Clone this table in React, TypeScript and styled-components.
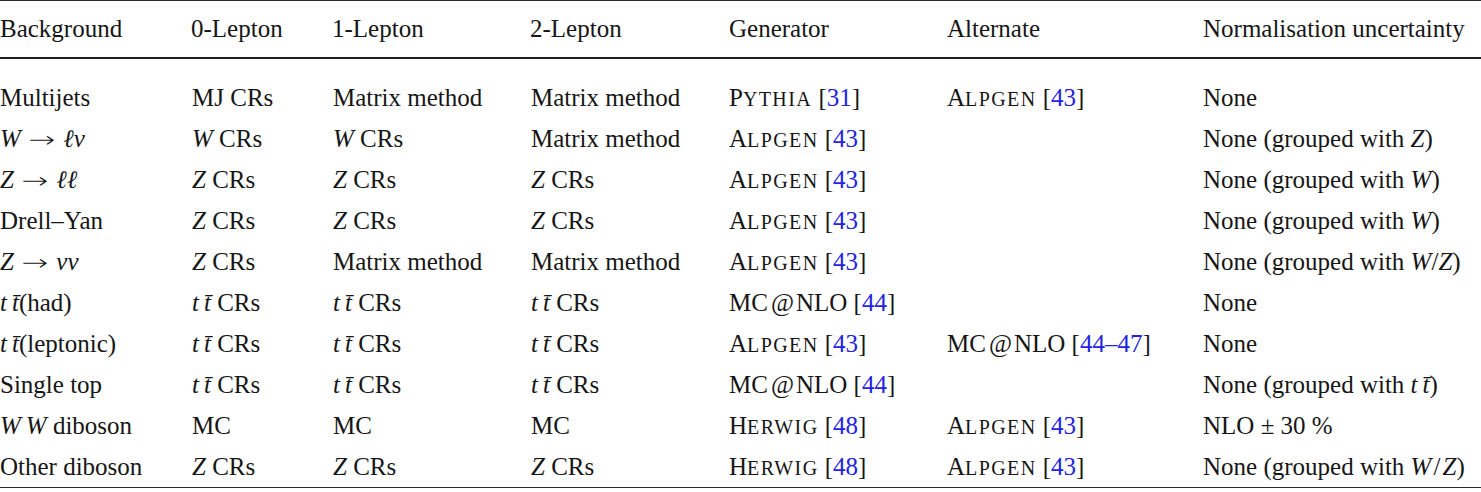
import React from "react";
import styled, { createGlobalStyle } from "styled-components";

const Global = createGlobalStyle`
  html, body { margin: 0; padding: 0; background: #ffffff; }
  body { font-family: "Liberation Serif", "Times New Roman", serif; color: #161616; }
`;

const Table = styled.div`
  width: 1481px;
  border-top: 1.5px solid #2a2a2a;
  border-bottom: 1.5px solid #2a2a2a;
  font-size: 25px;
  line-height: 1;
`;

const Row = styled.div<{ $head?: boolean }>`
  display: grid;
  grid-template-columns: 191px 141px 198px 199px 218px 256px 1fr;
  align-items: center;
  height: ${(p) => (p.$head ? "55.5px" : "41.1px")};
  white-space: nowrap;
`;

const Head = styled.div`
  border-bottom: 2px solid #1e1e1e;
`;

const Body = styled.div`
  padding-top: 18px;
`;

const Cell = styled.div<{ $indent?: number }>`
  padding-left: ${(p) => p.$indent ?? 0}px;
`;

const I = styled.i`
  font-style: italic;
`;

const Arrow = styled.span`
  font-family: "DejaVu Sans", sans-serif;
  font-size: 22px;
  font-weight: 300;
  display: inline-block;
  transform: scaleX(1.45);
  margin: 0 12px 0 12px;
`;

const At = styled.span`
  margin: 0 2px 0 3px;
`;

const Cap = styled.span`
  font-size: 1em;
`;

const Small = styled.span`
  font-size: 0.8em;
  letter-spacing: 0.07em;
`;

const Ref = styled.span`
  color: #2323e2;
`;

const SmallCaps = ({ first, rest }: { first: string; rest: string }) => (
  <>
    <Cap>{first}</Cap>
    <Small>{rest}</Small>
  </>
);

const Gen = ({ first, rest, refs }: { first: string; rest: string; refs: string }) => (
  <>
    <SmallCaps first={first} rest={rest} /> [<Ref>{refs}</Ref>]
  </>
);

const Mc = ({ refs }: { refs: string }) => (
  <>
    MC<At>@</At>NLO [<Ref>{refs}</Ref>]
  </>
);

const TT = () => (
  <I>
    t{"\u2009"}t{"\u0304"}
  </I>
);

const ZCR = () => (
  <>
    <I>Z</I> CRs
  </>
);

const TTCR = () => (
  <>
    <TT /> CRs
  </>
);

const Alpgen = () => <Gen first="A" rest="LPGEN" refs="43" />;
const Herwig = () => <Gen first="H" rest="ERWIG" refs="48" />;

type RowData = React.ReactNode[];

const rows: RowData[] = [
  ["Multijets", "MJ CRs", "Matrix method", "Matrix method", <Gen first="P" rest="YTHIA" refs="31" />, <Alpgen />, "None"],
  [
    <><I>W</I><Arrow>→</Arrow><I>ℓν</I></>,
    <><I>W</I> CRs</>,
    <><I>W</I> CRs</>,
    "Matrix method",
    <Alpgen />,
    "",
    <>None (grouped with <I>Z</I>)</>,
  ],
  [
    <><I>Z</I><Arrow>→</Arrow><I>ℓℓ</I></>,
    <ZCR />,
    <ZCR />,
    <ZCR />,
    <Alpgen />,
    "",
    <>None (grouped with <I>W</I>)</>,
  ],
  [
    "Drell–Yan",
    <ZCR />,
    <ZCR />,
    <ZCR />,
    <Alpgen />,
    "",
    <>None (grouped with <I>W</I>)</>,
  ],
  [
    <><I>Z</I><Arrow>→</Arrow><I>νν</I></>,
    <ZCR />,
    "Matrix method",
    "Matrix method",
    <Alpgen />,
    "",
    <>None (grouped with <I>W</I>/<I>Z</I>)</>,
  ],
  [<><TT />(had)</>, <TTCR />, <TTCR />, <TTCR />, <Mc refs="44" />, "", "None"],
  [<><TT />(leptonic)</>, <TTCR />, <TTCR />, <TTCR />, <Alpgen />, <Mc refs="44–47" />, "None"],
  ["Single top", <TTCR />, <TTCR />, <TTCR />, <Mc refs="44" />, "", <>None (grouped with <TT />)</>],
  [<><I>W{"\u2009"}W</I> diboson</>, "MC", "MC", "MC", <Herwig />, <Alpgen />, "NLO ± 30 %"],
  [
    "Other diboson",
    <ZCR />,
    <ZCR />,
    <ZCR />,
    <Herwig />,
    <Alpgen />,
    <>None (grouped with <I>W</I>{"\u200a"}/{"\u200a"}<I>Z</I>)</>,
  ],
];

const headers = ["Background", "0-Lepton", "1-Lepton", "2-Lepton", "Generator", "Alternate", "Normalisation uncertainty"];

export default function App() {
  return (
    <>
      <Global />
      <Table>
        <Head>
          <Row $head>
            {headers.map((h) => (
              <Cell key={h}>{h}</Cell>
            ))}
          </Row>
        </Head>
        <Body>
          {rows.map((r, i) => (
            <Row key={i}>
              {r.map((c, j) => (
                <Cell key={j} $indent={j > 0 && j < 4 ? 1 : 0}>
                  {c}
                </Cell>
              ))}
            </Row>
          ))}
        </Body>
      </Table>
    </>
  );
}
